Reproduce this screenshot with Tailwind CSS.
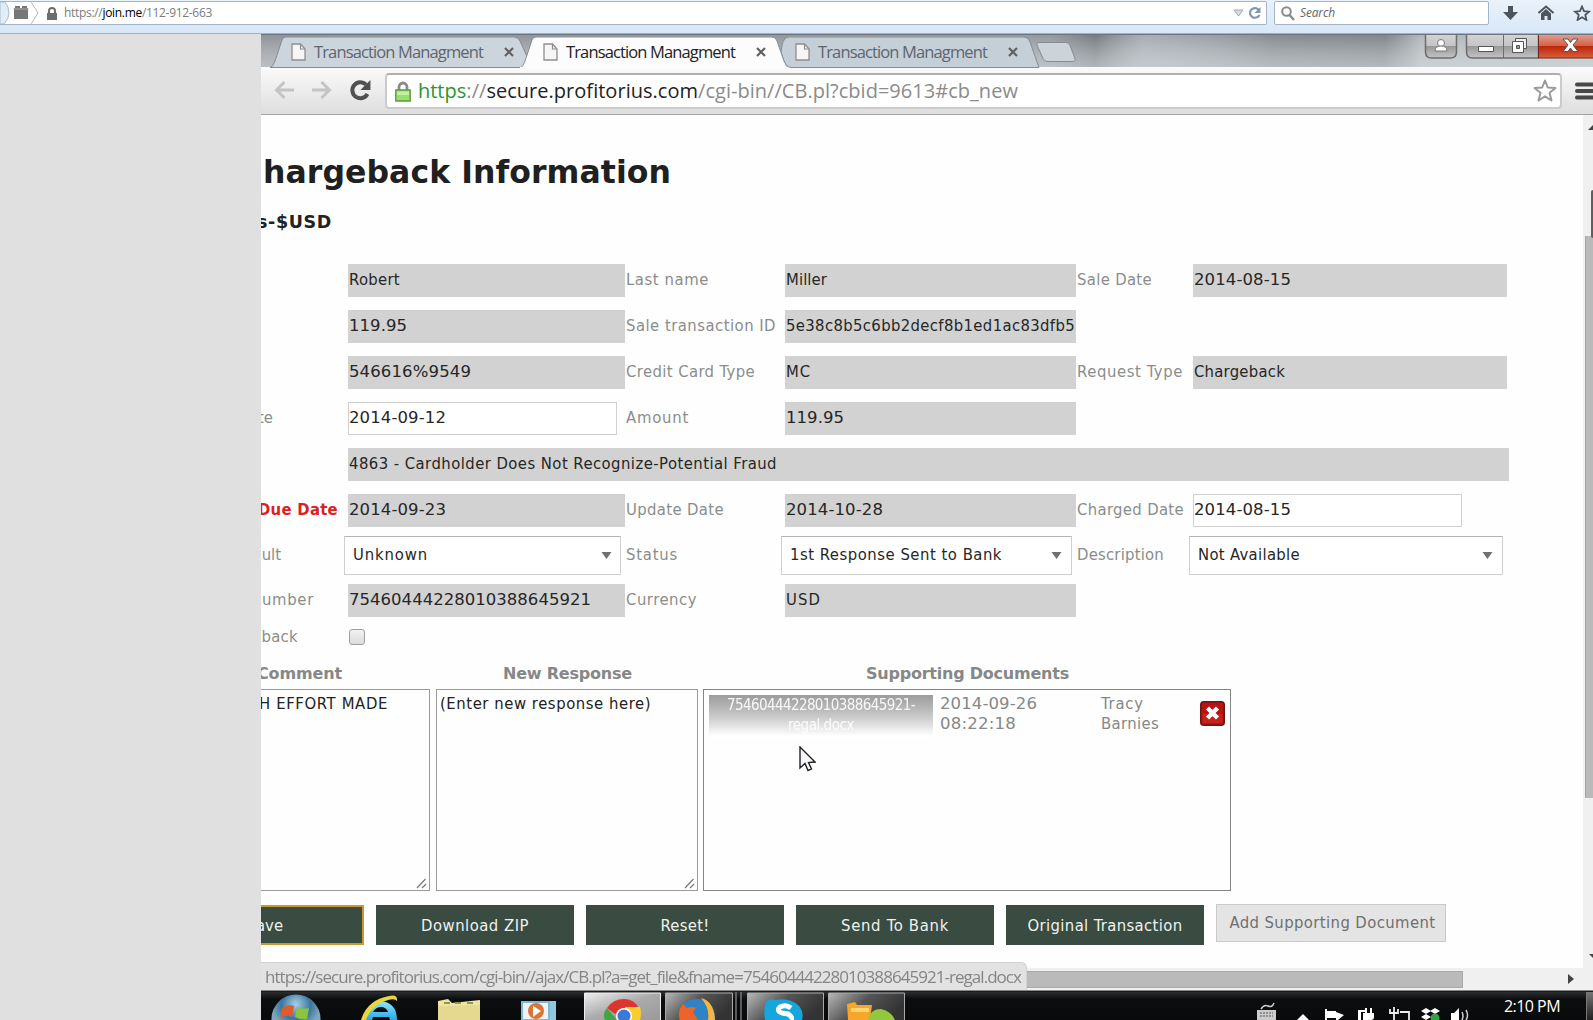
<!DOCTYPE html>
<html lang="en">
<head>
<meta charset="utf-8">
<title>Transaction Managment</title>
<script src="https://cdn.jsdelivr.net/npm/@tailwindcss/browser@4"></script>
</head>
<body class="w-[1593px] h-[1020px] overflow-hidden bg-[#e0e0e0] font-['DejaVu_Sans_Condensed','DejaVu_Sans',sans-serif] text-[16.5px] leading-5 text-[#222]">
<svg class="hidden">
  <symbol id="doc" viewBox="0 0 15 18"><path d="M1 1h8.500l4.500 5v11H1z" fill="#f6f6f6" stroke="#8e8e8e" stroke-width="1.300"/><path d="M9.500 1v5H14" fill="none" stroke="#8e8e8e" stroke-width="1.200"/></symbol>
  <symbol id="x" viewBox="0 0 10 10"><path d="M1 1l8 8M9 1L1 9" stroke="#606060" stroke-width="2.200"/></symbol>
  <symbol id="grip" viewBox="0 0 11 11"><path d="M1 10l8.500-9M6 10l4-4" stroke="#777" stroke-width="1.200"/></symbol>
  <symbol id="tri" viewBox="0 0 10 7"><path d="M0 0h10L5 7z" fill="#707070"/></symbol>
</svg>

<!-- Outer browser toolbar -->
<header class="h-[34px] flex items-start pt-px bg-linear-to-b from-[#eaf2fa] to-[#d8e7f7] border-b border-[#9cb2cb] font-['Open_Sans',sans-serif]">
  <div class="w-[1267px] h-6 flex items-center bg-white border border-l-0 border-[#a3b5c9] rounded-r-xs">
    <svg class="w-[60px] h-[22px]" viewBox="0 0 60 22"><path d="M0 0h5q4 5 4 11t-5 11H0z" fill="#e3edf8" stroke="#a9bdd3"/><path d="M15 4h5v2h2V4h5v2h1v11H14V6h1z" fill="#777"/><path d="M13.500 7h15" stroke="#aaa"/><path d="M31 0l7 11-7 11" fill="none" stroke="#b8b8b8"/><path d="M47 11h10v7H47z" fill="#6d6d6d"/><path d="M49 11V9a3 3 0 0 1 6 0v2" fill="none" stroke="#6d6d6d" stroke-width="2"/></svg>
    <span data-w="148" class="ml-[4px] text-[12px] whitespace-nowrap text-[#7c7c7c]">https://<span class="text-black">join.me</span>/112-912-663</span>
    <svg class="ml-auto mr-[5px] w-7 h-4" viewBox="0 0 28 16"><path d="M1 5h9l-4.500 6z" fill="#d8dde3" stroke="#a0a8b2"/><path d="M25.500 4.500A5 4.800 0 1 0 26.500 10" fill="none" stroke="#8395a8" stroke-width="2.200"/><path d="M27.500 2v6h-6z" fill="#8395a8"/></svg>
  </div>
  <div class="ml-[7px] w-[215px] h-6 flex items-center bg-white border border-[#a3b5c9] rounded-xs">
    <svg class="ml-[6px] w-[14px] h-[15px]" viewBox="0 0 14 15"><circle cx="5.500" cy="5.500" r="4.300" fill="none" stroke="#8b8b8b" stroke-width="2"/><path d="M8.500 9l4.500 5" stroke="#8b8b8b" stroke-width="2.600"/></svg>
    <span data-w="35" class="ml-[5px] text-[12px] italic text-[#666]">Search</span>
  </div>
  <svg class="ml-[13px] mt-1 w-[90px] h-4" viewBox="0 0 90 16"><path d="M5 1h5v6h5l-7.500 8L0 7h5z" transform="translate(1)" fill="#4d545d"/><path d="M36.500 8L44 1.500 51.500 8" fill="none" stroke="#4d545d" stroke-width="2"/><path d="M39 8.500L44 4l5 4.500V15h-3.500v-4h-3v4H39z" fill="#4d545d"/><path d="M80 1.500l2 4.600 5 .5-3.700 3.300 1.100 5L80 12.300l-4.400 2.600 1.100-5L73 6.600l5-.5z" fill="none" stroke="#4d545d" stroke-width="1.800"/></svg>
</header>

<div class="ml-[261px] w-[1332px] h-[986px] flex flex-col overflow-hidden bg-[#fefefe]">
  <!-- Tab strip -->
  <div class="relative h-[33px] shrink-0 flex items-start pt-[2px] border-t border-[#6c7580] bg-linear-to-r from-[#8f9398] via-[#939a9f] via-60% to-[#aab0b3] font-['Open_Sans',sans-serif] text-[16.500px] text-[#5e666e]">
    <svg class="absolute inset-0 w-full h-full" viewBox="0 0 1332 33" preserveAspectRatio="none"><defs><linearGradient id="v" x2="0" y2="1"><stop stop-color="#fff" stop-opacity="0"/><stop offset="1" stop-color="#dde3e6" stop-opacity=".55"/></linearGradient><linearGradient id="h"><stop stop-color="#666" stop-opacity="0"/><stop offset=".12" stop-color="#555c60" stop-opacity=".5"/><stop offset=".25" stop-color="#c5ced4" stop-opacity=".3"/><stop offset=".6" stop-color="#6d767b" stop-opacity=".5"/><stop offset=".9" stop-color="#5d666b" stop-opacity=".5"/><stop offset="1" stop-color="#bcc1c3" stop-opacity=".6"/></linearGradient></defs><path d="M790 0h370v33H790z" fill="url(#h)"/><path d="M1160 0h172v33h-172z" fill="#bcc1c3" opacity=".6"/><path d="M0 0h1332v33H0z" fill="url(#v)"/></svg>
    <div class="relative ml-[9px] w-[262px] h-[31px] flex items-center">
      <svg class="absolute inset-0 w-full h-full" viewBox="0 0 262 31"><path d="M0 30.500Q3 30 5 24L12 3q1-3 4-3h228q4 0 6 4l12 26.500z" fill="#ccd4dc" stroke="#858d94"/></svg>
      <svg class="relative -top-px ml-[21px] w-[15px] h-[18px]"><use href="#doc"/></svg><span data-w="169" class="relative -top-px ml-2 whitespace-nowrap">Transaction Managment</span><svg class="absolute left-[234px] top-[10px] w-[10px] h-[10px]"><use href="#x"/></svg>
    </div>
    <div class="relative z-10 -ml-[12px] w-[268px] h-[31px] flex items-center text-[#222]">
      <svg class="absolute inset-0 w-full h-full" viewBox="0 0 268 31"><path d="M0 31Q3 30 5 24L12 3q1-3 4-3h236q4 0 5 4l7 20q2 6 6 7z" fill="#fcfcfc" stroke="#858d94"/><path d="M0 31h268" stroke="#fcfcfc" stroke-width="2"/></svg>
      <svg class="relative -top-px ml-[23px] w-[15px] h-[18px]"><use href="#doc"/></svg><span data-w="169" class="relative -top-px ml-2 whitespace-nowrap">Transaction Managment</span><svg class="absolute left-[236px] top-[10px] w-[10px] h-[10px]"><use href="#x"/></svg>
    </div>
    <div class="relative -ml-[8px] w-[262px] h-[31px] flex items-center">
      <svg class="absolute inset-0 w-full h-full" viewBox="0 0 262 31"><path d="M2 8Q4 0 9 0h234q5 0 7 5l9 25.500H11Q6 30 4 24L1 15z" fill="#c5cfd8" stroke="#858d94"/></svg>
      <svg class="relative -top-px ml-[15px] w-[15px] h-[18px]"><use href="#doc"/></svg><span data-w="169" class="relative -top-px ml-2 whitespace-nowrap">Transaction Managment</span><svg class="absolute left-[228px] top-[10px] w-[10px] h-[10px]"><use href="#x"/></svg>
    </div>
    <svg class="relative -ml-[6px] mt-[5px] w-[40px] h-[20px]" viewBox="0 0 40 20"><path d="M3 .5h27q3 0 4 3l5 13q1 3-2 3H11q-3 0-4-3L1 3Q0 .5 3 .5z" fill="#ccd4db" stroke="#858d94"/></svg>
    <svg class="absolute left-[1163px] top-0 w-[169px] h-[25px]" viewBox="0 0 169 25"><defs><linearGradient id="b" x2="0" y2="1"><stop stop-color="#d4d4d4"/><stop offset=".5" stop-color="#c4c4c4"/><stop offset=".5" stop-color="#969696"/><stop offset="1" stop-color="#c5c5c5"/></linearGradient><linearGradient id="r" x2="0" y2="1"><stop stop-color="#e0a193"/><stop offset=".48" stop-color="#d4634a"/><stop offset=".5" stop-color="#bb2407"/><stop offset="1" stop-color="#d8603c"/></linearGradient></defs>
      <path d="M1.500-1v18q0 6 6 6h19q6 0 6-6V-1z" fill="url(#b)" stroke="#6d6d6d" stroke-width="1.500"/><circle cx="17" cy="8" r="3.500" fill="#fff" stroke="#777"/><path d="M11 16q0-5 6-5t6 5z" fill="#fff" stroke="#777"/>
      <path d="M42.500-1v18q0 6 6 6h66V-1z" fill="url(#b)" stroke="#6d6d6d" stroke-width="1.500"/><path d="M114.500-1h56v24h-56z" fill="url(#r)" stroke="#6b2a20"/><path d="M79.500 0v23" stroke="#6d6d6d"/>
      <path d="M54.500 11.500h15v5h-15z" fill="#fff" stroke="#555"/><path d="M91.500 3.500h11v10h-11z" fill="#eee" stroke="#555"/><path d="M88.500 6.500h11v11h-11z" fill="#fff" stroke="#555"/><path d="M92.500 10.500h3v3h-3z" fill="#999" stroke="#555"/>
      <path d="M139 4h5l2.500 3.500L149 4h5l-5 6 5 6.500h-5l-2.500-3.500-2.500 3.500h-5l5-6.500z" fill="#fff" stroke="#555"/></svg>
  </div>

  <!-- Address bar -->
  <div class="h-[48px] shrink-0 flex items-start pt-[6px] bg-linear-to-b from-[#fbfbfb] to-[#dedede] border-b border-[#a3a3a3]">
    <svg class="ml-[13px] mt-[6px] w-[98px] h-[24px]" viewBox="0 0 98 24"><g fill="none" stroke="#c4c4c4" stroke-width="3"><path d="M20 11H3M10.500 3l-8 8 8 8"/><path d="M38 11h17M47.500 3l8 8-8 8"/></g><path d="M92 5.500A8 8 0 1 0 93.500 15" fill="none" stroke="#505050" stroke-width="4"/><path d="M96.500 1v10h-10z" fill="#505050"/></svg>
    <div class="ml-[13px] w-[1178px] h-[36px] flex items-center bg-white border-2 border-[#cbcbcb] border-t-[#b0b0b0] rounded-sm">
      <svg class="ml-[8px] w-[16px] h-[21px]" viewBox="0 0 16 21"><path d="M4 10V6a4 4 0 0 1 8 0v4" fill="none" stroke="#8b8b8b" stroke-width="2.800"/><path d="M.8 9h14.400v11H.8z" fill="#9ade72" stroke="#5a9c3d" stroke-width="1.400"/><path d="M2 10.500h12V14H2z" fill="#c0efa4"/></svg>
      <span data-w="600" class="ml-[7px] font-['Open_Sans',sans-serif] text-[20px] leading-7 whitespace-nowrap text-[#8b8b8b]"><span class="text-[#2a952c]">https</span>://<span class="text-[#222]">secure.profitorius.com</span>/cgi-bin//CB.pl?cbid=9613#cb_new</span>
      <svg class="ml-auto mr-[3px] w-[24px] h-[24px]" viewBox="0 0 24 24"><path d="M12 1.500l2.800 7 7.700.5-6 4.800 2 7.700-6.500-4.200-6.500 4.200 2-7.700-6-4.800 7.700-.5z" fill="none" stroke="#9a9a9a" stroke-width="2" stroke-linejoin="round"/></svg>
    </div>
    <svg class="ml-[13px] mt-2 w-[18px] h-5" viewBox="0 0 18 20"><path d="M2 3.500h18M2 10h18M2 16.500h18" stroke="#484848" stroke-width="4" stroke-linecap="round"/></svg>
  </div>

  <!-- Page and vertical scrollbar -->
  <div class="flex h-[853px] shrink-0">
    <main class="relative w-[1322px] overflow-hidden">
      <h1 class="pt-[36px] pl-[2px] h-[92px] font-['DejaVu_Sans',sans-serif] font-bold text-[31.500px] leading-[42px] text-[#202020]"><span data-w="408" class="inline-block whitespace-nowrap">hargeback Information</span></h1>
      <h2 class="-ml-[4px] h-[50px] font-['DejaVu_Sans',sans-serif] font-bold text-[17.500px] leading-[31px]"><span data-w="75" class="inline-block whitespace-nowrap">s-$USD</span></h2>

      <div class="grid grid-cols-[87px_278px_159px_292px_116px_1fr] grid-rows-[46px_46px_46px_46px_46px_46px_44px_46px_28px] items-center text-[#8a8d8c] whitespace-nowrap">
        <span></span><div class="w-[277px] h-[33px] pl-px flex items-center bg-[#d2d2d2] text-[#262626]"><span data-w="51">Robert</span></div>
        <span data-w="83" class="justify-self-start">Last name</span><div class="w-[291px] h-[33px] pl-px flex items-center bg-[#d2d2d2] text-[#262626]"><span data-w="41">Miller</span></div>
        <span data-w="75" class="justify-self-start">Sale Date</span><div class="w-[314px] h-[33px] pl-px flex items-center bg-[#d2d2d2] text-[#262626] font-['DejaVu_Sans']"><span data-w="97">2014-08-15</span></div>

        <span></span><div class="w-[277px] h-[33px] pl-px flex items-center bg-[#d2d2d2] text-[#262626] font-['DejaVu_Sans']"><span data-w="58">119.95</span></div>
        <span data-w="150" class="justify-self-start">Sale transaction ID</span><div class="w-[291px] h-[33px] pl-px flex items-center bg-[#d2d2d2] text-[#262626]"><span data-w="289">5e38c8b5c6bb2decf8b1ed1ac83dfb5</span></div>
        <span></span><span></span>

        <span></span><div class="w-[277px] h-[33px] pl-px flex items-center bg-[#d2d2d2] text-[#262626] font-['DejaVu_Sans']"><span data-w="122">546616%9549</span></div>
        <span data-w="129" class="justify-self-start">Credit Card Type</span><div class="w-[291px] h-[33px] pl-px flex items-center bg-[#d2d2d2] text-[#262626]"><span data-w="25">MC</span></div>
        <span data-w="106" class="justify-self-start">Request Type</span><div class="w-[314px] h-[33px] pl-px flex items-center bg-[#d2d2d2] text-[#262626]"><span data-w="91">Chargeback</span></div>

        <div class="w-[12px] flex justify-end">te</div><div class="w-[269px] h-[33px] flex items-center bg-white border border-[#d0d0d0] text-[#262626] font-['DejaVu_Sans']"><span data-w="97">2014-09-12</span></div>
        <span data-w="63" class="justify-self-start">Amount</span><div class="w-[291px] h-[33px] pl-px flex items-center bg-[#d2d2d2] text-[#262626] font-['DejaVu_Sans']"><span data-w="58">119.95</span></div>
        <span></span><span></span>

        <span></span><div class="col-span-5 w-[1161px] h-[33px] pl-px flex items-center bg-[#d2d2d2] text-[#262626]"><span data-w="428">4863 - Cardholder Does Not Recognize-Potential Fraud</span></div>

        <div class="w-[77px] flex justify-end font-bold text-[#dc1f1f]"><span data-w="80">Due Date</span></div><div class="w-[277px] h-[33px] pl-px flex items-center bg-[#d2d2d2] text-[#262626] font-['DejaVu_Sans']"><span data-w="97">2014-09-23</span></div>
        <span data-w="98" class="justify-self-start">Update Date</span><div class="w-[291px] h-[33px] pl-px flex items-center bg-[#d2d2d2] text-[#262626] font-['DejaVu_Sans']"><span data-w="97">2014-10-28</span></div>
        <span data-w="107" class="justify-self-start">Charged Date</span><div class="w-[269px] h-[33px] flex items-center bg-white border border-[#d0d0d0] text-[#262626] font-['DejaVu_Sans']"><span data-w="97">2014-08-15</span></div>

        <div class="w-[20px] flex justify-end">ult</div><div class="-ml-1 w-[277px] h-[39px] pl-2 pr-2 flex items-center justify-between bg-white border border-[#cfcfcf] border-t-[#b4b4b4] text-[#262626]"><span data-w="75">Unknown</span><svg class="w-[11px] h-[7px]"><use href="#tri"/></svg></div>
        <span data-w="52" class="justify-self-start">Status</span><div class="-ml-1 w-[291px] h-[39px] pl-[8px] pr-[9px] flex items-center justify-between bg-white border border-[#cfcfcf] border-t-[#b4b4b4] text-[#262626]"><span data-w="212">1st Response Sent to Bank</span><svg class="w-[11px] h-[7px]"><use href="#tri"/></svg></div>
        <span data-w="87" class="justify-self-start">Description</span><div class="-ml-1 w-[314px] h-[39px] pl-[8px] pr-[9px] flex items-center justify-between bg-white border border-[#cfcfcf] border-t-[#b4b4b4] text-[#262626]"><span data-w="102">Not Available</span><svg class="w-[11px] h-[7px]"><use href="#tri"/></svg></div>

        <div class="w-[53px] flex justify-end"><span data-w="52">umber</span></div><div class="w-[277px] h-[33px] pl-px flex items-center bg-[#d2d2d2] text-[#262626] font-['DejaVu_Sans']"><span data-w="242">75460444228010388645921</span></div>
        <span data-w="71" class="justify-self-start">Currency</span><div class="w-[291px] h-[33px] pl-px flex items-center bg-[#d2d2d2] text-[#262626]"><span data-w="35">USD</span></div>
        <span></span><span></span>

        <div class="w-[37px] flex justify-end"><span data-w="46">eback</span></div><div class="ml-px w-4 h-4 rounded-[3px] border border-[#a0a0a0] bg-linear-to-b from-[#f2f2f2] to-[#dcdcdc]"></div>
      </div>

      <!-- Comment, response and documents -->
      <div class="h-[38px] grid grid-cols-[169px_274px_528px] font-['DejaVu_Sans'] font-bold text-[16px] items-center pt-[8px] text-[#858887] whitespace-nowrap">
        <div class="w-[81px] flex justify-end"><span data-w="85">Comment</span></div><span data-w="129" class="ml-[73px] justify-self-start">New Response</span><span data-w="203" class="ml-[162px] justify-self-start">Supporting Documents</span>
      </div>
      <div class="flex h-[202px] whitespace-nowrap">
        <div class="relative w-[169px] border border-l-0 border-[#9a9a9a] pt-[4px]"><div class="w-[127px] flex justify-end"><span data-w="129">H EFFORT MADE</span></div><svg class="absolute right-[2px] bottom-px w-[11px] h-[11px]"><use href="#grip"/></svg></div>
        <div class="relative ml-[6px] w-[262px] border border-[#9a9a9a] pt-[4px] pl-[3px]"><span data-w="211" class="inline-block">(Enter new response here)</span><svg class="absolute right-[2px] bottom-px w-[11px] h-[11px]"><use href="#grip"/></svg></div>
        <div class="relative ml-[5px] w-[528px] border border-[#858585] flex items-start pt-[5px] pl-[5px] text-[#858887]">
          <div class="w-[224px] h-[43px] bg-linear-to-b from-[#9c9c9c] via-[#c9c9c9] via-50% to-white to-95% text-center text-[15px] leading-[20px] text-white/90 blur-[.7px]"><span data-w="188" class="inline-block">75460444228010388645921-</span><br><span data-w="66" class="inline-block">regal.docx</span></div>
          <div class="ml-[7px] mt-[-1px] w-[161px] flex flex-col items-start font-['DejaVu_Sans']"><span data-w="97">2014-09-26</span><span data-w="76">08:22:18</span></div>
          <div class="mt-[-1px] w-[99px] flex flex-col items-start"><span data-w="43">Tracy</span><span data-w="58">Barnies</span></div>
          <svg class="mt-[6px] w-[25px] h-[25px]" viewBox="0 0 25 25"><rect x=".8" y=".8" width="23.400" height="23.400" rx="3" fill="#b51512" stroke="#6c1514" stroke-width="1.600"/><path d="M2.500 13h20v9h-20z" fill="#d42a1c" opacity=".6"/><path d="M7.500 7l10 10M17.500 7l-10 10" stroke="#fff" stroke-width="4.500"/></svg>
          <svg class="absolute left-[95px] top-[56px] w-[17px] h-[26px]" viewBox="0 0 17 26"><path d="M1 1v21l5-4.500 3 7 3.500-1.500-3-6.500 6.500-.5z" fill="#f5f5fa" stroke="#222" stroke-width="1.400"/></svg>
        </div>
      </div>

      <div class="mt-[14px] flex items-start whitespace-nowrap text-[#eef2ef]">
        <div class="w-[103px] h-[40px] pt-px flex items-center border-2 border-l-0 border-[#c8992d] bg-[#3a4b42]"><span class="-ml-[5px]">ave</span></div>
        <div class="ml-3 w-[198px] h-[40px] pt-[2px] flex items-center justify-center bg-[#3a4b42]"><span data-w="108">Download ZIP</span></div>
        <div class="ml-3 w-[198px] h-[40px] pt-[2px] flex items-center justify-center bg-[#3a4b42]"><span data-w="49">Reset!</span></div>
        <div class="ml-3 w-[198px] h-[40px] pt-[2px] flex items-center justify-center bg-[#3a4b42]"><span data-w="108">Send To Bank</span></div>
        <div class="ml-3 w-[198px] h-[40px] pt-[2px] flex items-center justify-center bg-[#3a4b42]"><span data-w="155">Original Transaction</span></div>
        <div class="ml-3 -mt-px w-[230px] h-[38px] pl-[3px] flex items-center justify-center bg-[#e4e4e4] border border-[#cacaca] text-[#6d706f]"><span data-w="206">Add Supporting Document</span></div>
      </div>
    </main>
    <div class="relative w-[10px] bg-[#f0f0f0]">
      <div class="absolute left-[2px] top-[121px] w-2 h-[562px] bg-[#bababa] border-l border-[#a5a5a5]"></div>
      <div class="absolute left-[8px] top-[75px] w-[2px] h-[48px] rounded-l bg-[#5f5f5f]"></div>
      <svg class="absolute left-[5px] top-[10px] w-[5px] h-[5px]" viewBox="0 0 5 5"><path d="M0 5l5-5v5z" fill="#444"/></svg>
      <svg class="absolute left-[6px] top-[839px] w-[4px] h-[4px]" viewBox="0 0 4 4"><path d="M0 0h4v4z" fill="#444"/></svg>
    </div>
  </div>

  <!-- Horizontal scrollbar with link status bubble -->
  <div class="relative h-[23px] shrink-0 flex items-center bg-[#f0f0f0] border-b border-[#888]">
    <div class="ml-[760px] w-[442px] h-[17px] bg-[#bababa] border border-[#a9a9a9]"></div>
    <svg class="ml-[105px] w-[6px] h-[10px]" viewBox="0 0 6 10"><path d="M0 0l6 5-6 5z" fill="#444"/></svg>
    <div class="absolute left-0 bottom-0 w-[766px] h-[28px] pl-[4px] flex items-center rounded-tr-md bg-[#e2e2e2] border-t border-r border-[#d2d2d2]"><span data-w="756" class="font-['Open_Sans',sans-serif] text-[17px] whitespace-nowrap text-[#858585] blur-[.4px]">https://secure.profitorius.com/cgi-bin//ajax/CB.pl?a=get_file&amp;fname=75460444228010388645921-regal.docx</span></div>
  </div>

  <!-- Taskbar -->
  <footer class="h-[29px] shrink-0 flex items-start bg-linear-to-b from-[#2b2e30] via-[#0c0d0e] via-25% to-[#090a0b] border-t border-[#1b1b1b]">
    <svg class="w-[650px] h-[28px]" viewBox="0 0 650 28">
      <defs><linearGradient id="t" x1="0" y1="0" x2="1" y2="1"><stop stop-color="#eee"/><stop offset=".5" stop-color="#aaa"/><stop offset="1" stop-color="#999"/></linearGradient><linearGradient id="u" x2="1" y2=".4"><stop stop-color="#b8b8b8"/><stop offset=".5" stop-color="#555"/><stop offset="1" stop-color="#333"/></linearGradient><radialGradient id="o" cy=".2"><stop stop-color="#a8cfe4"/><stop offset=".6" stop-color="#3b759f"/><stop offset="1" stop-color="#7da6bf"/></radialGradient><linearGradient id="e" x2="0" y2="1"><stop stop-color="#92e6ff"/><stop offset="1" stop-color="#25a8e4"/></linearGradient></defs>
      <circle cx="35" cy="27" r="24.500" fill="url(#o)"/><path d="M21 16q6-4 12-2l-2 11q-6-3-12 1z" fill="#df5b2c"/><path d="M36 15q6 3 12 1l-2 11q-6 1-12-2z" fill="#8cc43c"/>
      <path d="M102 28q3-17 18-19 16 2 16 19h-7l-1-3h-16l-1 3zM112 20h15q-2-5-7-5t-8 5z" fill="url(#e)"/><path d="M100 28Q106 8 128 4q9-2 8 5-2-3-9-1-17 5-22 20z" fill="#e8d63c"/>
      <path d="M177 9l10-2 4 4 28-3v20h-42z" fill="#f2e4a0"/><path d="M177 14l42-1v15h-42z" fill="#e5d88f"/><path d="M183 11h6M194 11h6M206 11h6" stroke="#8a9a50" stroke-width="2"/>
      <path d="M266 9h29v19h-29z" fill="#8fc7e2"/><path d="M261 10h27v18h-27z" fill="#eef4f6" stroke="#7eb8d6" stroke-width="2"/><circle cx="275" cy="19" r="8" fill="#db7537"/><path d="M272 14l8 5-8 6z" fill="#fff"/>
      <path d="M323.500 1h76v28h-76z" fill="url(#t)" stroke="#eee"/><path d="M404.500 1h67v28h-67z" fill="url(#u)" stroke="#aaa"/><path d="M486.500 1h76v28h-76z" fill="url(#u)" stroke="#aaa"/><path d="M567.500 1h76v28h-76z" fill="url(#u)" stroke="#aaa"/><path d="M475 0v28M480 0v28" stroke="#777" stroke-width="1.500"/>
      <path d="M346 16q6-9 17-9 10 0 15 9h-14l-10 6z" fill="#df3332"/><path d="M346 16l10 12h-12q-3-6 2-12z" fill="#43a445"/><path d="M364 15h15q2 6 0 13h-14z" fill="#f9cd2e"/><circle cx="363" cy="24" r="8" fill="#fff"/><circle cx="363" cy="24" r="6.500" fill="#3c78d8"/>
      <circle cx="436" cy="25" r="18" fill="#2f83c5"/><path d="M419 28q-3-9 3-16l4 4q6-2 9 0l-3 4 5 8z" fill="#ec6426"/><path d="M440 6q13 3 14 22h-7q2-12-7-22z" fill="#f6b53c"/>
      <path d="M505 10q4-4 9-2 15-3 24 6 5 6 3 14h-37q-2-10 1-18z" fill="#15a6dc"/><path d="M530 16q-5-4-11-1-4 4 2 6l6 1q5 3 3 6" fill="none" stroke="#fff" stroke-width="5"/>
      <path d="M586 12l8-2 2 3h15l-2 15h-22z" fill="#f4a72b"/><path d="M607 28q2-11 13-11 10 2 14 11z" fill="#93c83d"/><path d="M590 16h18v4h-18z" fill="#ffd46f"/>
    </svg>
    <svg class="ml-[345px] w-[215px] h-[28px]" viewBox="0 0 215 28" fill="#fff"><path d="M1 18h19v10H1z" fill="#ccc"/><path d="M4 21h13M4 24h13" stroke="#555" stroke-dasharray="2 1"/><path d="M5 17q3-5 7-3t6-3" fill="none" stroke="#ccc" stroke-width="1.500"/><path d="M41 28l6-6 6 6z"/><path d="M69 17h2v11h-2zM71 19h9v7h-9zM80 20l8 3-6 5h-2z"/><path d="M102 18h9v2h-6v8h-3zM107 21h11v4q0 3-3 3h-8zM109 16h2v5h-2zM114 16h2v5h-2z"/><path d="M134 17v4h8v-4M138 15v13M144 20h9v8" fill="none" stroke="#eee" stroke-width="1.800"/><path d="M165 19l5-3 5 3-5 3zM174 19l5-3 5 3-5 3zM165 25l5-3 5 3-5 3z"/><circle cx="179" cy="26" r="4.500" fill="#35a148"/><path d="M195 21h3l5-5v12h-8z"/><path d="M206 20q2 4 0 8M210 18q3 5 0 10" fill="none" stroke="#ccc" stroke-width="1.500"/></svg>
    <span data-w="56" class="ml-[33px] mt-[4px] font-['Open_Sans',sans-serif] text-[16px] whitespace-nowrap text-white">2:10 PM</span>
    <div class="ml-auto w-[7px] h-[28px] border-l border-[#777] bg-linear-to-b from-[#777] to-[#222]"></div>
  </footer>
</div>

<script>
  function fit() {
    document.querySelectorAll('[data-w]').forEach(function (el) {
      el.style.letterSpacing = '0px';
      var r = document.createRange();
      r.selectNodeContents(el);
      var d = Number(el.dataset.w) - r.getBoundingClientRect().width;
      el.style.letterSpacing = d / el.textContent.length + 'px';
    });
  }
  fit();
  window.addEventListener('load', fit);
  new ResizeObserver(fit).observe(document.body);
  document.fonts.ready.then(fit);
</script>
</body>
</html>
